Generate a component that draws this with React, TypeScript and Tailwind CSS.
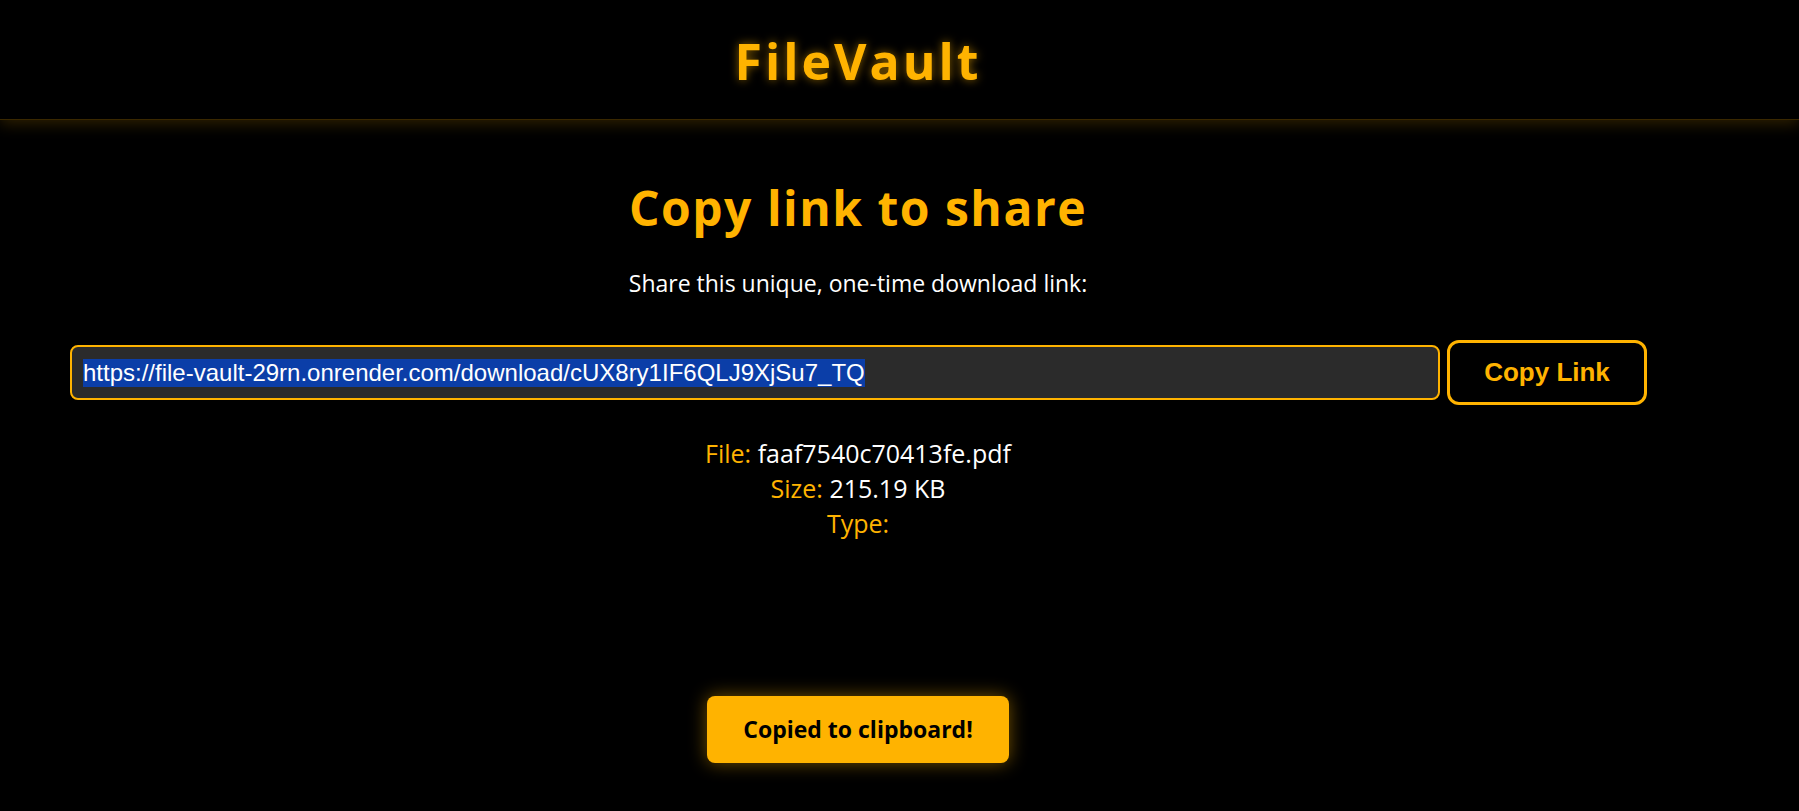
import { useEffect, useRef } from "react";

function InfoRow({ label, value }: { label: string; value: string }) {
  return (
    <p>
      <span className="text-[#ffb300]">{label}</span> <span className="text-white">{value}</span>
    </p>
  );
}

export default function App() {
  const link = "https://file-vault-29rn.onrender.com/download/cUX8ry1IF6QLJ9XjSu7_TQ";
  const inputRef = useRef<HTMLInputElement>(null);

  // the link has just been copied, so it stays selected
  useEffect(() => {
    inputRef.current?.focus();
    inputRef.current?.select();
  }, []);

  return (
    <div className="relative min-h-[811px] w-full bg-black font-['Segoe_UI','Open_Sans',sans-serif]">
      <header className="relative z-10 h-[120px] border-b border-[#3a2800] bg-black shadow-[0_4px_14px_rgba(255,179,0,0.18)]">
        <div className="flex w-[1716px] justify-center pt-[31px]">
          <h1 className="text-[50px] font-bold leading-[60px] tracking-[3px] text-[#ffb300] [text-shadow:0_0_10px_rgba(255,179,0,0.55)]">
            FileVault
          </h1>
        </div>
      </header>

      <main className="flex w-[1716px] flex-col items-center pt-[58px]">
        <h2 className="text-[48px] font-bold leading-[60px] tracking-[1.5px] text-[#ffb300]">
          Copy link to share
        </h2>
        <p className="mt-[30px] text-[23px] leading-[30px] text-white">
          Share this unique, one-time download link:
        </p>

        <div className="mt-[42px] flex w-full items-center gap-[7px] pl-[70px] pr-[69px]">
          <input
            ref={inputRef}
            readOnly
            value={link}
            className="h-[55px] flex-1 rounded-[8px] border-2 border-[#ffb300] bg-[#2b2b2b] px-[11px] font-['Liberation_Sans',Arial,sans-serif] text-[24px] text-white outline-none selection:bg-[#0b3ea8] selection:text-white"
          />
          <button className="h-[65px] w-[200px] rounded-[12px] border-[3px] border-[#ffb300] bg-black font-['Liberation_Sans',Arial,sans-serif] text-[26px] font-bold text-[#ffb300]">
            Copy Link
          </button>
        </div>

        <div className="mt-[31px] text-center text-[25px] leading-[35px]">
          <InfoRow label="File:" value="faaf7540c70413fe.pdf" />
          <InfoRow label="Size:" value="215.19 KB" />
          <InfoRow label="Type:" value="" />
        </div>
      </main>

      <div className="absolute bottom-[48px] left-[858px] flex h-[67px] w-[302px] -translate-x-1/2 items-center justify-center rounded-[8px] bg-[#ffb300] text-[23px] font-bold text-black shadow-[0_0_18px_rgba(255,179,0,0.45)]">
        Copied to clipboard!
      </div>
    </div>
  );
}
